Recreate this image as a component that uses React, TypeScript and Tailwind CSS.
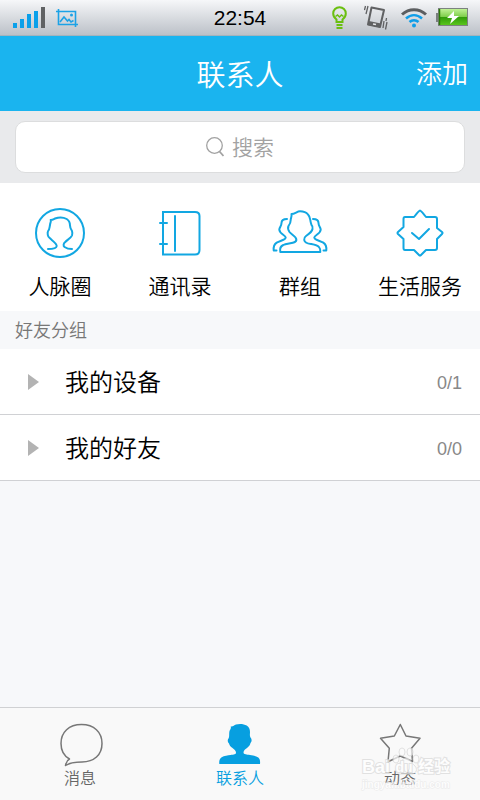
import { useState } from 'react'
import type { ReactNode } from 'react'

function SignalIcon() {
  return (
    <svg width="33" height="22" viewBox="0 0 33 22" aria-hidden="true">
      <g fill="#0aa0ea">
        <rect x="1" y="16" width="4" height="5" />
        <rect x="8" y="12" width="4" height="9" />
        <rect x="15" y="7" width="4" height="14" />
        <rect x="22" y="4" width="4" height="17" />
      </g>
      <rect x="29" y="0" width="4" height="21" fill="#606264" />
    </svg>
  )
}

function PictureIcon() {
  return (
    <svg width="22" height="18" viewBox="0 0 22 18" fill="none" stroke="#1ba2e6" strokeWidth="1.6" aria-hidden="true">
      <path d="M0 2.500H19.500V18M2.500 0V15.500H22" />
      <path d="M4 13L8 8L11.500 12L13 10.500L15 13L17.500 11.500" />
      <circle cx="15.500" cy="6" r="1.500" fill="#1ba2e6" stroke="none" />
    </svg>
  )
}

function BulbIcon() {
  return (
    <svg width="15" height="24" viewBox="0 0 15 24" fill="none" stroke="#6abf10" strokeWidth="2" aria-hidden="true">
      <path d="M4.500 16V13.500C2.500 12 1.200 10 1.200 7.500C1.200 4 4 1.200 7.500 1.200S13.800 4 13.800 7.500C13.800 10 12.500 12 10.500 13.500V16Z" />
      <path d="M3.500 10.500L5.500 9L7.500 11L9.500 9L11.500 10.500" strokeWidth="1.500" />
      <path d="M4.500 19H10.500M4.500 22H10.500" />
    </svg>
  )
}

function VibrateIcon() {
  return (
    <svg width="24" height="25" viewBox="0 0 24 25" fill="none" stroke="#606163" aria-hidden="true">
      <path d="M7.500 2.500L20 5L16 22L4 19.500Z" strokeWidth="2" strokeLinejoin="round" />
      <path d="M4.500 18L16.500 20.500" strokeWidth="4" />
      <path d="M9 19L12 19.600" stroke="#e4e6e8" strokeWidth="1.500" />
      <path d="M1.500 1L0.500 5M4 1L2 9M19 23L20 16M21.500 24.500L23 17M22.500 13L22 16" strokeWidth="1.300" />
    </svg>
  )
}

function WifiIcon() {
  return (
    <svg width="26" height="20" viewBox="0 0 26 20" fill="none" strokeWidth="3" aria-hidden="true">
      <path d="M1 6.500C8 0 18 0 25 6.500" stroke="#5c5e60" />
      <path d="M5 10.500C10 6 16 6 21 10.500M8.500 14C11 11.500 15 11.500 17.500 14" stroke="#109ee8" strokeWidth="2.500" />
      <circle cx="13" cy="17.500" r="2" fill="#109ee8" />
    </svg>
  )
}

function BatteryIcon() {
  return (
    <svg width="32" height="19" viewBox="0 0 32 19" aria-hidden="true">
      <defs>
        <linearGradient id="charge" x1="0" y1="0" x2="0" y2="1">
          <stop offset="0" stopColor="#c4f49a" />
          <stop offset="0.480" stopColor="#7fce4c" />
          <stop offset="0.500" stopColor="#2f9a08" />
          <stop offset="1" stopColor="#5cc81e" />
        </linearGradient>
      </defs>
      <rect x="0" y="5" width="3" height="9" fill="#7b7e80" />
      <rect x="2.500" y="0.500" width="29" height="17" fill="url(#charge)" stroke="#7c8280" />
      <path d="M3.500 1V17" stroke="#2c7a08" strokeWidth="1.500" />
      <path d="M18 3L11 10H16L14 16L23 8H18Z" fill="#fff" />
    </svg>
  )
}

function SearchIcon() {
  return (
    <svg width="18" height="20" viewBox="0 0 18 20" fill="none" stroke="#a2a2a2" strokeWidth="1.300" aria-hidden="true">
      <circle cx="8.500" cy="8.500" r="7.800" />
      <path d="M13.500 14.500L17.500 19" strokeWidth="1.800" />
    </svg>
  )
}

function CircleIcon() {
  return (
    <svg width="50" height="50" viewBox="0 0 50 50" fill="none" stroke="#12a7e2" strokeWidth="2" strokeLinecap="round" strokeLinejoin="round" aria-hidden="true">
      <circle cx="25" cy="25" r="24" />
      <path d="M13 41C17 41 21.500 40.500 21.700 38C22 36 18 33 15.700 31C14 29.500 13 29 12.800 27C12.500 25 12.500 24 13 23.300C14.500 22 14.500 19 15 17C15 15 16.500 13.500 15.700 12C17.500 12 19 11 20 10.500C24 9 29 9.500 31.700 11C34 12.500 35 15 35 17.500C35 20 36 21.500 37 23C37.500 24.500 37.500 26 37 27.500C36 30 32 32 30 34.300C28.500 35.500 28 38 29.500 39C31 40 34 41 37 41" />
    </svg>
  )
}

function BookIcon() {
  return (
    <svg width="50" height="50" viewBox="0 0 50 50" fill="none" stroke="#12a7e2" strokeWidth="2" strokeLinecap="round" aria-hidden="true">
      <path d="M8 4H40C43 4 44.500 5.500 44.500 8V42C44.500 45 43 46.500 40 46.500H8Z" />
      <path d="M20 8V43M5 15H12M5 36H12" />
    </svg>
  )
}

function GroupIcon() {
  return (
    <svg width="56" height="50" viewBox="0 0 56 50" fill="none" stroke="#12a7e2" strokeWidth="2" strokeLinecap="round" strokeLinejoin="round" aria-hidden="true">
      <path d="M8.300 44H48.300C48.500 42 48.500 41 47.300 39.500C45.500 37 42 36.500 39 36C35 35.500 32.500 34.500 32.200 32C32 30 32.500 29 34 28C37 26 40 24 40.500 21C41 19 40.700 18 39.500 17C39 15.500 38.500 14 38.300 12C38 9.500 37.500 8 36 6.500C34 4 31 3.300 28 3.300C25 3.300 23 6 19.500 6C20 8.500 18.700 10 18.700 12C18.700 14 18 16 16.500 18C15.500 20 16.500 22.500 17.500 24C19 26 22 27.500 23.500 29.500C24.500 31 24.500 33 23 34C20 35.500 14 35.500 11.300 37C9 38 7.500 40 8.300 44Z" />
      <path d="M15 11C11 11 9.500 13 9.500 15C9.500 18 7.500 19.500 7.300 21.500C7.300 26 13.700 27 13.700 29.500C13.700 32 8 32.500 4.700 34.700C2 36.500 1.300 39 1.700 42.500H4.500M41 11C45 11 46.500 13 46.500 15C46.500 18 48.500 19.500 48.700 21.500C48.700 26 42.300 27 42.300 29.500C42.300 32 48 32.500 51.300 34.700C54 36.500 54.700 39 54.300 42.500H51.500" />
    </svg>
  )
}

function ServiceIcon() {
  return (
    <svg width="50" height="50" viewBox="0 0 50 50" fill="none" stroke="#12a7e2" strokeWidth="2" strokeLinecap="round" strokeLinejoin="round" aria-hidden="true">
      <path d="M25 2.500Q26 2.500 31 9H40Q42 9 42 11V20L47 24Q48 25 47 26L42 31V40Q42 42 40 42H31L26 47Q25 48 24 47L19 42H10Q8.500 42 8.500 40V31L3 26Q2 25 3 24L8.500 19V11Q8.500 9 10 9H19Q24 2.500 25 2.500Z" />
      <path d="M17 25L24 31L34 21" />
    </svg>
  )
}

function MessageIcon() {
  return (
    <svg width="46" height="44" viewBox="0 0 46 44" fill="none" stroke="#777" strokeWidth="1.500" strokeLinejoin="round" aria-hidden="true">
      <path d="M12.500 36C7 33 4 27 4 20.500C4 9 12 1.500 24.500 1.500S45 9 45 20.500S37 39 25 39C18 39 13 39.500 8.500 42.500C9 40 9.500 37.500 12.500 36Z" />
    </svg>
  )
}

function ContactsIcon() {
  return (
    <svg width="44" height="44" viewBox="0 0 44 44" fill="#079fe0" aria-hidden="true">
      <path d="M1.300 41C1 38 1.500 36 3.700 34.300C6 32.500 10 32.500 12.500 32C16 31.500 18 31.500 18 29.500C18 27.500 16 26.500 14.500 25C12.500 23.500 11.500 22.500 11 20.500C9.500 19 9.300 17 10.500 15.500C11.500 14 11 11 11.300 9C11.500 7 13.500 5.500 12.700 3.500C15 4 16 2 18 1.500C21 0.500 26 0.700 28.700 2.500C31 4 32 6 32 9C32 11 31.500 13 32.500 14.500C34 16 34 18.500 32.500 20C32 22 31 23.500 29 25C27 26.500 25.500 27.500 25.500 29.500C25.500 31.500 29 31.500 32 32C35 32.300 38 33 40.300 34.500C42 36 42.300 38 42 41Z" />
    </svg>
  )
}

function StarIcon() {
  return (
    <svg width="44" height="44" viewBox="0 0 44 44" fill="none" stroke="#777" strokeWidth="1.500" strokeLinejoin="round" aria-hidden="true">
      <path d="M22.300 1.500L28 13L42 15.300L33.500 25.300L34.500 38.500L22.300 33L10 38.700L11.300 25.300L2.500 15.300L16.300 13Z" />
    </svg>
  )
}

function PawIcon() {
  return (
    <svg width="28" height="28" viewBox="0 0 28 28" fill="#fcfcfc" stroke="#d8d8d8" aria-hidden="true">
      <ellipse cx="4" cy="12" rx="3" ry="4" />
      <ellipse cx="10" cy="5" rx="3" ry="4" />
      <ellipse cx="18" cy="5" rx="3" ry="4" />
      <ellipse cx="24" cy="12" rx="3" ry="4" />
      <path d="M14 11C18 11 19 16 23 19C27 24 22 28 18 27H10C5 28 2 24 5 19C9 16 10 11 14 11Z" />
    </svg>
  )
}

const shortcuts: { label: string; icon: ReactNode }[] = [
  { label: '人脉圈', icon: <CircleIcon /> },
  { label: '通讯录', icon: <BookIcon /> },
  { label: '群组', icon: <GroupIcon /> },
  { label: '生活服务', icon: <ServiceIcon /> },
]

const groups = [
  { name: '我的设备', count: '0/1' },
  { name: '我的好友', count: '0/0' },
]

const tabs: { label: string; icon: ReactNode }[] = [
  { label: '消息', icon: <MessageIcon /> },
  { label: '联系人', icon: <ContactsIcon /> },
  { label: '动态', icon: <StarIcon /> },
]

function StatusBar() {
  return (
    <div className="grid h-9 grid-cols-3 items-center border-b border-[#a3b3bd] bg-linear-to-b from-[#f6f7f9] to-[#bcc1c8] px-3">
      <div className="flex items-center gap-[11px]">
        <SignalIcon />
        <PictureIcon />
      </div>
      <time className="text-center text-[21px] leading-6 text-black">22:54</time>
      <div className="flex items-center justify-end gap-[9px]">
        <div className="flex items-center gap-[13px]">
          <div className="flex items-center gap-[17px]">
            <BulbIcon />
            <VibrateIcon />
          </div>
          <WifiIcon />
        </div>
        <BatteryIcon />
      </div>
    </div>
  )
}

function Watermark() {
  return (
    <div className="pointer-events-none absolute top-[39px] left-1/2 -translate-x-[38px] opacity-70" aria-hidden="true">
      <div className="absolute left-[30px] top-0">
        <PawIcon />
      </div>
      <div className="relative flex items-center pt-2 text-lg leading-6 font-bold whitespace-nowrap text-white [-webkit-text-stroke:2px_#d8d8d8] [paint-order:stroke]">
        <span>Bai</span>
        <span className="w-7 text-center text-sm leading-6">du</span>
        <span className="text-base leading-6">经验</span>
      </div>
      <div className="text-[10px] leading-3 font-bold text-white [-webkit-text-stroke:1px_#e4e4e4] [paint-order:stroke]">
        jingyan.baidu.com
      </div>
    </div>
  )
}

export default function App() {
  const [query, setQuery] = useState('')
  const [active, setActive] = useState('联系人')

  return (
    <div className="flex min-h-screen flex-col bg-[#f7f8fa] font-['Liberation_Sans','Noto_Sans_CJK_SC',sans-serif] font-[350]">
      <StatusBar />
      <header className="grid h-[75px] grid-cols-[1fr_auto_1fr] items-center bg-[#1ab4ef] px-3 text-white">
        <h1 className="col-start-2 pt-1 text-[29px] leading-9 font-[350]">联系人</h1>
        <button className="justify-self-end text-[26px] leading-9">添加</button>
      </header>

      <div className="bg-[#e9eaec] px-[15px] py-[10px]">
        <label className="flex h-[52px] items-center justify-center gap-2 rounded-[10px] border border-[#dcddde] bg-white">
          <SearchIcon />
          <input
            type="text"
            aria-label="搜索"
            placeholder="搜索"
            value={query}
            onChange={(e) => setQuery(e.target.value)}
            className="field-sizing-content text-[21px] leading-8 outline-none placeholder:text-[#a2a2a2]"
          />
        </label>
      </div>

      <nav className="grid h-32 grid-cols-4 bg-white pt-[25px]">
        {shortcuts.map((s) => (
          <button key={s.label} className="flex flex-col items-center gap-[13px] text-[21px] leading-8 text-black">
            {s.icon}
            <span className="whitespace-nowrap">{s.label}</span>
          </button>
        ))}
      </nav>

      <main className="flex-1">
        <h2 className="px-[15px] pt-[2px] text-lg leading-9 font-[350] text-[#777]">好友分组</h2>
        <ul>
          {groups.map((g) => (
            <li key={g.name} className="border-b border-[#d0d1d4] bg-white">
              <button className="flex h-[65px] w-full items-center pr-[18px] pl-7 text-left">
                <svg width="11" height="16" viewBox="0 0 11 16" fill="#b3b3b3" aria-hidden="true">
                  <path d="M0 0L11 8L0 16Z" />
                </svg>
                <span className="flex-1 pt-[2px] pl-[26px] text-2xl leading-8 text-black">{g.name}</span>
                <span className="pt-[2px] text-lg leading-6 text-[#888]">{g.count}</span>
              </button>
            </li>
          ))}
        </ul>
      </main>

      <footer className="grid h-[93px] grid-cols-3 border-t border-[#d0d1d3] bg-[#f9f9f9]">
        {tabs.map((t) => (
          <div key={t.label} className="relative">
            <button
              onClick={() => setActive(t.label)}
              className={`flex w-full flex-col items-center pt-[15px] text-base leading-6 ${
                t.label === active ? 'text-[#079fe0]' : 'text-[#666]'
              }`}
            >
              {t.icon}
              {t.label}
            </button>
            {t.label === '动态' && <Watermark />}
          </div>
        ))}
      </footer>
    </div>
  )
}
